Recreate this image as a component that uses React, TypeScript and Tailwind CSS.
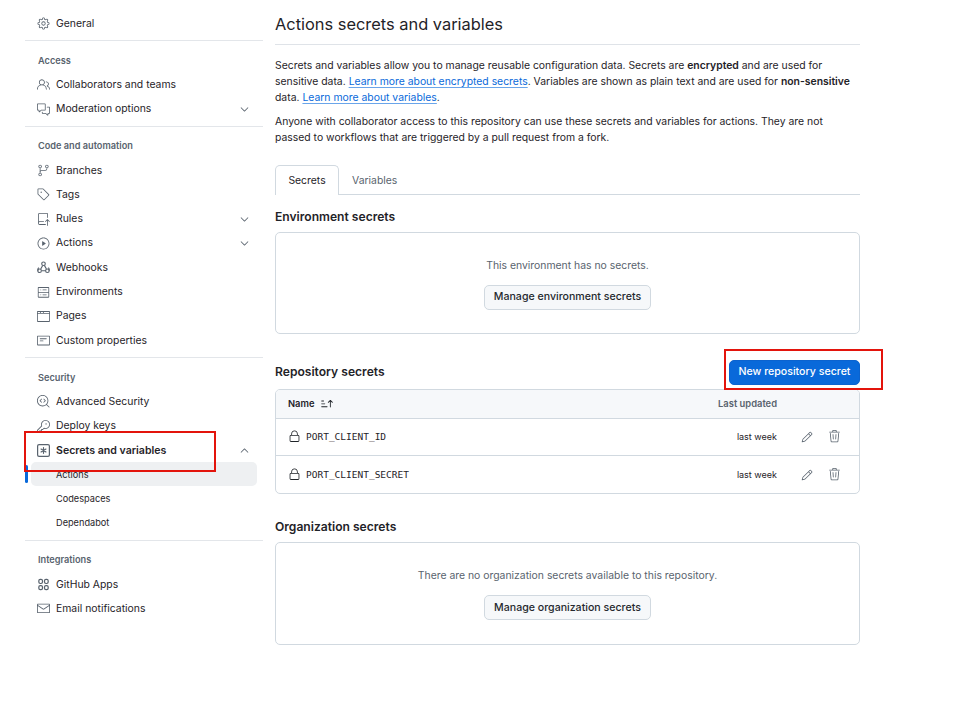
import type { ComponentType, ReactNode } from 'react';
import {
  GoBrowser,
  GoChevronDown,
  GoChevronUp,
  GoCodescan,
  GoCommentDiscussion,
  GoGear,
  GoGitBranch,
  GoKey,
  GoLock,
  GoMail,
  GoNote,
  GoPencil,
  GoPeople,
  GoPlay,
  GoRepoPush,
  GoServer,
  GoSortAsc,
  GoTag,
  GoTrash,
} from 'react-icons/go';

type Icon = ComponentType<{ className?: string }>;

function AppsIcon({ className }: { className?: string }) {
  return (
    <svg viewBox="0 0 16 16" fill="none" stroke="currentColor" strokeWidth="1.5" className={className}>
      <rect x="2.25" y="1.75" width="4.5" height="5" rx="1.75" />
      <rect x="9.25" y="1.75" width="4.5" height="5" rx="1.75" />
      <rect x="2.25" y="9.25" width="4.5" height="5" rx="1.75" />
      <rect x="9.25" y="9.25" width="4.5" height="5" rx="1.75" />
    </svg>
  );
}

function WebhookIcon({ className }: { className?: string }) {
  return (
    <svg viewBox="0 0 16 16" fill="none" stroke="currentColor" strokeWidth="1.4" className={className}>
      <circle cx="8" cy="3.4" r="2.2" />
      <circle cx="3.2" cy="12" r="2.2" />
      <circle cx="12.8" cy="12" r="2.2" />
      <path d="M7 5.5 4.6 9.8M6 12h4.6M9.1 5.4l2.5 4.4" />
      <path d="M2.2 8.2A4.5 4.5 0 0 0 1 12M14 8.2a4.5 4.5 0 0 1 1 3.8" />
    </svg>
  );
}

function KeyAsteriskIcon({ className }: { className?: string }) {
  return (
    <svg viewBox="0 0 16 16" fill="none" stroke="currentColor" strokeWidth="1.5" className={className}>
      <rect x="0.75" y="0.75" width="14.5" height="14.5" rx="1.75" />
      <path strokeLinecap="round" d="M8 4.5v7M5 6.2l6 3.6M11 6.2 5 9.8" />
    </svg>
  );
}

function NavItem({
  icon: Icon,
  label,
  chevron,
  bold,
}: {
  icon: Icon;
  label: string;
  chevron?: 'up' | 'down';
  bold?: boolean;
}) {
  return (
    <div className="flex h-[24.3px] items-center pl-[12px] pr-[12px] pt-[1px] text-[#1f2328]">
      <Icon className="h-[13px] w-[13px] shrink-0 text-[#59636e]" />
      <span className={`ml-[6px] flex-1 ${bold ? 'text-[10.6px] font-semibold' : ''}`}>{label}</span>
      {chevron === 'down' && <GoChevronDown className="h-[13px] w-[13px] text-[#59636e]" />}
      {chevron === 'up' && <GoChevronUp className="h-[13px] w-[13px] text-[#59636e]" />}
    </div>
  );
}

function SubItem({ label, active }: { label: string; active?: boolean }) {
  return (
    <div className="relative flex h-[24.3px] items-center">
      {active && <div className="absolute left-0 top-[3px] h-[18px] w-[3px] rounded-sm bg-[#0969da]" />}
      <div
        className={`ml-[6px] flex h-[24.3px] w-[226px] items-center rounded-[5px] pl-[25px] pt-[1px] text-[9.2px] text-[#1f2328] ${
          active ? 'bg-[#eef0f2]' : ''
        }`}
      >
        {label}
      </div>
    </div>
  );
}

function Heading({ children }: { children: ReactNode }) {
  return (
    <div className="flex h-[20px] items-center pl-[13px] pt-[1px] text-[9.2px] font-semibold text-[#59636e]">
      {children}
    </div>
  );
}

function Divider({ className }: { className: string }) {
  return <div className={`h-px bg-[#e3e6ea] ${className}`} />;
}

function Sidebar() {
  return (
    <aside className="w-[238px] shrink-0 pt-[11px]">
      <NavItem icon={GoGear} label="General" />
      <Divider className="mb-[9px] mt-[5px]" />
      <Heading>Access</Heading>
      <div className="mt-[2px]">
        <NavItem icon={GoPeople} label="Collaborators and teams" />
        <NavItem icon={GoCommentDiscussion} label="Moderation options" chevron="down" />
      </div>
      <Divider className="mb-[9px] mt-[5px]" />
      <Heading>Code and automation</Heading>
      <div className="mt-[2px]">
        <NavItem icon={GoGitBranch} label="Branches" />
        <NavItem icon={GoTag} label="Tags" />
        <NavItem icon={GoRepoPush} label="Rules" chevron="down" />
        <NavItem icon={GoPlay} label="Actions" chevron="down" />
        <NavItem icon={WebhookIcon} label="Webhooks" />
        <NavItem icon={GoServer} label="Environments" />
        <NavItem icon={GoBrowser} label="Pages" />
        <NavItem icon={GoNote} label="Custom properties" />
      </div>
      <Divider className="mb-[9px] mt-[5px]" />
      <Heading>Security</Heading>
      <div className="mt-[2px]">
        <NavItem icon={GoCodescan} label="Advanced Security" />
        <NavItem icon={GoKey} label="Deploy keys" />
        <NavItem icon={KeyAsteriskIcon} label="Secrets and variables" chevron="up" bold />
        <SubItem label="Actions" active />
        <SubItem label="Codespaces" />
        <SubItem label="Dependabot" />
      </div>
      <Divider className="mb-[8px] mt-[5px]" />
      <Heading>Integrations</Heading>
      <div className="mt-[3px]">
        <NavItem icon={AppsIcon} label="GitHub Apps" />
        <NavItem icon={GoMail} label="Email notifications" />
      </div>
    </aside>
  );
}

function EmptyBox({ text, button, className }: { text: string; button: string; className: string }) {
  return (
    <div className={`flex flex-col items-center rounded-[5px] border border-[#d1d9e0] pt-[25px] ${className}`}>
      <div className="text-[#59636e]">{text}</div>
      <button className="mt-[11px] h-[25px] rounded-[5px] border border-[#d1d9e0] bg-[#f6f8fa] px-[9px] text-[10.6px] font-medium text-[#25292e]">
        {button}
      </button>
    </div>
  );
}

function SecretRow({ name, last }: { name: string; last?: boolean }) {
  return (
    <div className={`flex items-center pl-[12px] ${last ? 'h-[37px]' : 'h-[37.5px] border-b border-[#d1d9e0]'}`}>
      <GoLock className="h-[13px] w-[13px] text-[#1f2328]" />
      <span className="ml-[5px] flex-1 font-['DejaVu_Sans_Mono',monospace] text-[9.5px] text-[#1f2328]">{name}</span>
      <span className="text-[9px] text-[#1f2328]">last week</span>
      <GoPencil className="ml-[24px] h-[12px] w-[12px] text-[#59636e]" />
      <GoTrash className="ml-[15px] mr-[18px] h-[13px] w-[13px] text-[#59636e]" />
    </div>
  );
}

export default function App() {
  return (
    <div className="relative flex h-[710px] w-[980px] items-start overflow-hidden bg-white pl-[25px] font-['Inter',sans-serif] text-[10.4px] leading-[16px]">
      <Sidebar />
      <main className="ml-[12px] w-[585px] pt-[13px]">
        <div className="border-b border-[#dfe3e8] pb-[8px]">
          <h1 className="text-[16.4px] leading-[23px] text-[#1f2328]">Actions secrets and variables</h1>
        </div>
        <p className="mt-[13px] text-[#1f2328]">
          Secrets and variables allow you to manage reusable configuration data. Secrets are{' '}
          <b className="font-semibold">encrypted</b> and are used for sensitive data.{' '}
          <a className="text-[#0969da] underline decoration-[#6aa5ea] underline-offset-2">
            Learn more about encrypted secrets
          </a>
          . Variables are shown as plain text and are used for <b className="font-semibold">non-sensitive</b> data.{' '}
          <a className="text-[#0969da] underline decoration-[#6aa5ea] underline-offset-2">
            Learn more about variables
          </a>
          .
        </p>
        <p className="mt-[7.5px] text-[#1f2328]">
          Anyone with collaborator access to this repository can use these secrets and variables for actions. They are
          not passed to workflows that are triggered by a pull request from a fork.
        </p>
        <div className="mt-[19px] flex h-[30px] border-b border-[#d1d9e0]">
          <div className="-mb-px flex h-[30px] w-[64px] items-center justify-center rounded-t-[5px] border border-b-0 border-[#d1d9e0] bg-white pt-[2px] text-[#1f2328]">
            Secrets
          </div>
          <div className="ml-[13px] flex items-center pt-[4px] text-[#59636e]">Variables</div>
        </div>
        <h2 className="mt-[13px] text-[12.1px] font-semibold leading-[18px] text-[#1f2328]">Environment secrets</h2>
        <EmptyBox
          className="mt-[6px] h-[102px]"
          text="This environment has no secrets."
          button="Manage environment secrets"
        />
        <div className="mt-[20px] flex h-[37px] items-center justify-between">
          <h2 className="text-[12.1px] font-semibold text-[#1f2328]">Repository secrets</h2>
          <button className="h-[25px] w-[131px] rounded-[5px] border border-[#0b63cf] bg-[#0969da] text-[10.6px] font-medium text-white">
            New repository secret
          </button>
        </div>
        <div className="-mt-[2px] overflow-hidden rounded-[5px] border border-[#d1d9e0]">
          <div className="flex h-[29px] items-center border-b border-[#d1d9e0] bg-[#f6f8fa] pl-[12px] pr-[82px] pt-[1px] text-[9.4px] font-semibold text-[#59636e]">
            <span className="text-[#1f2328]">Name</span>
            <GoSortAsc className="ml-[5px] h-[14px] w-[14px] text-[#1f2328]" />
            <span className="ml-auto">Last updated</span>
          </div>
          <SecretRow name="PORT_CLIENT_ID" />
          <SecretRow name="PORT_CLIENT_SECRET" last />
        </div>
        <h2 className="mt-[24px] text-[12.1px] font-semibold leading-[18px] text-[#1f2328]">Organization secrets</h2>
        <EmptyBox
          className="mt-[6px] h-[103px]"
          text="There are no organization secrets available to this repository."
          button="Manage organization secrets"
        />
      </main>
      <div className="absolute left-[24px] top-[431px] h-[41px] w-[192px] border-2 border-[#e3140c]" />
      <div className="absolute left-[724px] top-[349px] h-[41px] w-[159px] border-2 border-[#e3140c]" />
    </div>
  );
}
